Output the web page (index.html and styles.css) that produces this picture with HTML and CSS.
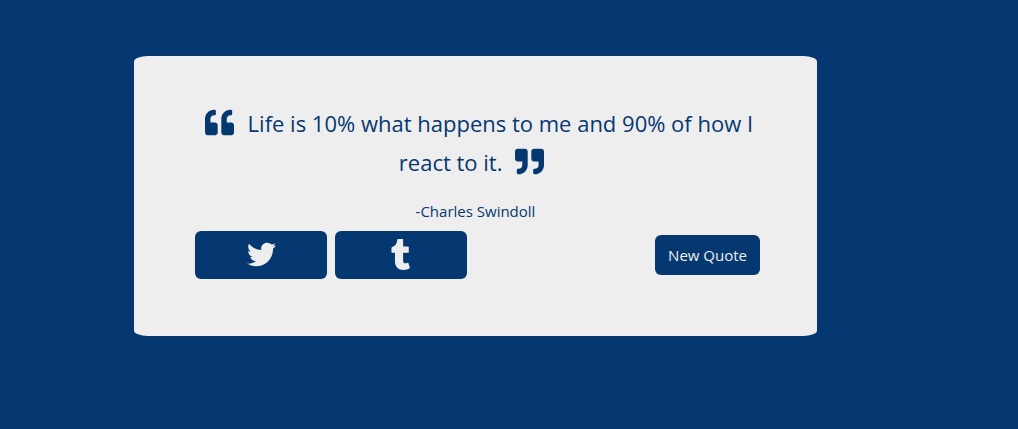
FILE: index.html
```html
<!DOCTYPE html>
<html lang="en">
<head>
<meta charset="utf-8">
<meta name="viewport" content="width=device-width, initial-scale=1">
<title>Random Quote</title>
<link rel="stylesheet" href="styles.css">
</head>
<body>
<main class="quote-box">
  <blockquote class="quote">
    <svg class="mark" viewBox="0 0 512 512" aria-hidden="true"><path d="M464 256h-80v-64c0-35.3 28.7-64 64-64h8c13.3 0 24-10.7 24-24V56c0-13.3-10.7-24-24-24h-8c-88.4 0-160 71.6-160 160v240c0 26.5 21.5 48 48 48h128c26.5 0 48-21.5 48-48V304c0-26.5-21.5-48-48-48zm-288 0H96v-64c0-35.3 28.7-64 64-64h8c13.3 0 24-10.7 24-24V56c0-13.3-10.7-24-24-24h-8C71.6 32 0 103.6 0 192v240c0 26.5 21.5 48 48 48h128c26.5 0 48-21.5 48-48V304c0-26.5-21.5-48-48-48z"/></svg>
    Life is 10% what happens to me and 90% of how I react to it.
    <svg class="mark" viewBox="0 0 512 512" aria-hidden="true"><path d="M464 32H336c-26.500 0-48 21.500-48 48v128c0 26.500 21.500 48 48 48h80v64c0 35.300-28.700 64-64 64h-8c-13.300 0-24 10.700-24 24v48c0 13.300 10.700 24 24 24h8c88.400 0 160-71.600 160-160V80c0-26.500-21.500-48-48-48zm-288 0H48C21.500 32 0 53.500 0 80v128c0 26.500 21.500 48 48 48h80v64c0 35.300-28.700 64-64 64h-8c-13.300 0-24 10.700-24 24v48c0 13.300 10.700 24 24 24h8c88.400 0 160-71.600 160-160V80c0-26.500-21.500-48-48-48z"/></svg>
  </blockquote>
  <p class="author">-Charles Swindoll</p>
  <div class="actions">
    <a class="share" href="#twitter" aria-label="Share on Twitter"><svg class="bird" viewBox="0 0 512 512" aria-hidden="true"><path d="M459.370 151.716c.325 4.548.325 9.097.325 13.645 0 138.720-105.583 298.558-298.558 298.558-59.452 0-114.680-17.219-161.137-47.106 8.447.974 16.568 1.299 25.340 1.299 49.055 0 94.213-16.568 130.274-44.832-46.132-.975-84.792-31.188-98.112-72.772 6.498.974 12.995 1.624 19.818 1.624 9.421 0 18.843-1.300 27.614-3.573-48.081-9.747-84.143-51.980-84.143-102.985v-1.299c13.969 7.797 30.214 12.670 47.431 13.319-28.264-18.843-46.781-51.005-46.781-87.391 0-19.492 5.197-37.360 14.294-52.954 51.655 63.675 129.300 105.258 216.365 109.807-1.624-7.797-2.599-15.918-2.599-24.040 0-57.828 46.782-104.934 104.934-104.934 30.213 0 57.502 12.670 76.670 33.137 23.715-4.548 46.456-13.320 66.599-25.340-7.798 24.366-24.366 44.833-46.132 57.827 21.117-2.273 41.584-8.122 60.426-16.243-14.292 20.791-32.161 39.308-52.628 54.253z"/></svg></a>
    <a class="share" href="#tumblr" aria-label="Share on Tumblr"><svg class="letter" viewBox="0 0 320 512" aria-hidden="true"><path d="M309.800 480.300c-13.600 14.500-50 31.700-97.400 31.700-120.800 0-147-88.800-147-140.600v-144H17.900c-5.500 0-10-4.500-10-10v-68c0-7.200 4.500-13.600 11.300-16 62-21.800 81.500-76 84.300-117.100.8-11 6.500-16.300 16.100-16.300h70.900c5.500 0 10 4.500 10 10v115.200h83c5.500 0 10 4.400 10 9.900v81.700c0 5.500-4.500 10-10 10h-83.400V360c0 34.200 23.700 53.600 68 35.800 4.800-1.900 9-3.200 12.700-2.200 3.500.9 5.800 3.400 7.400 7.900l22 64.300c1.800 5 3.300 10.600-.4 14.500z"/></svg></a>
    <button class="new-quote" type="button">New Quote</button>
  </div>
</main>
</body>
</html>
```
FILE: styles.css
```css
* {
  box-sizing: border-box;
}

body {
  margin: 0;
  padding: 56px 201px 56px 134px;
  background: #053870;
  color: #053870;
  font-family: "Segoe UI", "Open Sans", "Noto Sans", sans-serif;
  font-size: 15px;
  line-height: 24px;
}

.quote-box {
  padding: 48px 57px 57px;
  background: #eee;
  border-radius: 2%;
}

.quote {
  margin: 0 0 17px;
  font-size: 22px;
  line-height: 39px;
  text-align: center;
}

.mark {
  width: 29px;
  height: 29px;
  margin: 0 8px 0 7px;
  fill: currentColor;
  vertical-align: -5px;
}

.author {
  margin: 0 0 8px;
  text-align: center;
}

.actions {
  display: flex;
  align-items: center;
  gap: 8px;
  padding-left: 4px;
}

.share {
  display: flex;
  align-items: center;
  justify-content: center;
  width: 132px;
  height: 48px;
  padding-bottom: 2px;
  border-radius: 6px;
  background: #053870;
  color: #eee;
}

.bird {
  width: 29px;
  height: 29px;
  fill: currentColor;
}

.letter {
  height: 31px;
  fill: currentColor;
}

.new-quote {
  margin-left: auto;
  padding: 8px 13px;
  border: 0;
  border-radius: 6px;
  background: #053870;
  color: #eee;
  font: inherit;
}
```
